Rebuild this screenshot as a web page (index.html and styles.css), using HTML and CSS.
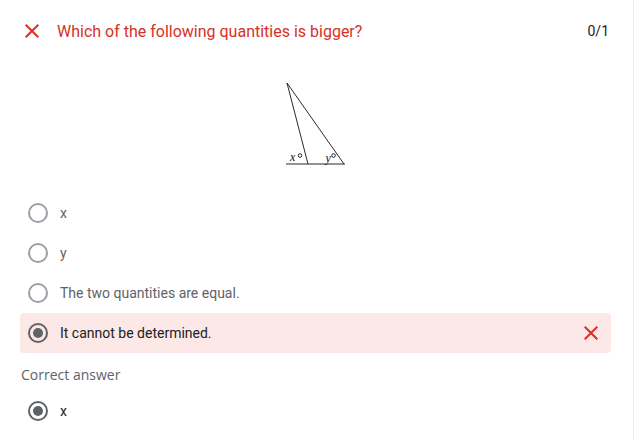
FILE: index.html
```html
<!DOCTYPE html>
<html>
<head>
    <title>Quiz result</title>
    <link rel="stylesheet" href="styles.css">
</head>
<body>

    <div class="card">
        <div class="question-head">
            <svg class="icon icon-wrong" viewBox="0 0 24 24"><path d="M19 6.41L17.59 5 12 10.59 6.41 5 5 6.41 10.59 12 5 17.59 6.41 19 12 13.41 17.59 19 19 17.59 13.41 12z"/></svg>
            <span class="question-title">Which of the following quantities is bigger?</span>
            <span class="score">0/1</span>
        </div>

        <div class="figure">
            <svg width="60" height="84" viewBox="0 0 60 84">
                <g stroke="#111" stroke-width="0.9" fill="none">
                    <line x1="0" y1="82" x2="59" y2="82"/>
                    <line x1="1" y1="1" x2="22" y2="82"/>
                    <line x1="1" y1="1" x2="58" y2="82"/>
                    <circle cx="14" cy="73.5" r="1.8"/>
                    <circle cx="47.5" cy="73.5" r="1.8"/>
                </g>
                <text x="4" y="79" class="fig-label">x</text>
                <text x="39.5" y="79.5" class="fig-label">y</text>
            </svg>
        </div>

        <div class="options">
            <div class="option">
                <span class="radio"></span>
                <span class="option-text">x</span>
            </div>
            <div class="option">
                <span class="radio"></span>
                <span class="option-text">y</span>
            </div>
            <div class="option">
                <span class="radio"></span>
                <span class="option-text">The two quantities are equal.</span>
            </div>
            <div class="option option-wrong">
                <span class="radio checked"></span>
                <span class="option-text">It cannot be determined.</span>
                <svg class="icon icon-wrong mark" viewBox="0 0 24 24"><path d="M19 6.41L17.59 5 12 10.59 6.41 5 5 6.41 10.59 12 5 17.59 6.41 19 12 13.41 17.59 19 19 17.59 13.41 12z"/></svg>
            </div>
        </div>

        <div class="correct-label">Correct answer</div>
        <div class="option option-correct">
            <span class="radio checked"></span>
            <span class="option-text">x</span>
        </div>
    </div>

</body>
</html>
```

FILE: styles.css
```css
body {
    margin: 0;
    font-family: Roboto, Arial, sans-serif;
    background: #fff;
}

.card {
    width: 591px;
    padding: 19px 22px 0 20px;
    height: 421px;
    border-right: 1px solid #efefef;
}

.question-head {
    display: flex;
    align-items: center;
    height: 24px;
}

.icon {
    width: 24px;
    height: 24px;
    flex-shrink: 0;
}

.icon-wrong {
    fill: #d93025;
}

.question-title {
    margin-left: 13px;
    font-size: 16px;
    color: #d93025;
    flex: 1;
}

.score {
    font-size: 14px;
    color: #202124;
    margin-right: 2px;
}

.figure {
    display: flex;
    justify-content: center;
    margin: 39px 0 27px;
}

.figure svg {
    display: block;
}

.fig-label {
    font-family: "Liberation Serif", serif;
    font-style: italic;
    font-size: 12px;
    fill: #111;
}

.option {
    display: flex;
    align-items: center;
    height: 40px;
    padding: 0 8px;
    font-size: 14px;
}

.option-text {
    margin-left: 12px;
    color: #5f6368;
    flex: 1;
}

.radio {
    width: 20px;
    height: 20px;
    box-sizing: border-box;
    border: 2px solid #9aa0a6;
    border-radius: 50%;
    display: flex;
    align-items: center;
    justify-content: center;
    flex-shrink: 0;
}

.radio.checked {
    border-color: #5f6368;
}

.radio.checked::after {
    content: "";
    width: 10px;
    height: 10px;
    border-radius: 50%;
    background: #5f6368;
}

.option-wrong {
    background: #fce8e6;
    border-radius: 4px;
}

.option-wrong .option-text,
.option-correct .option-text {
    color: #202124;
}

.correct-label {
    margin-top: 12px;
    margin-left: 1px;
    font-family: "Open Sans", Roboto, sans-serif;
    font-size: 14px;
    line-height: 20px;
    color: #5f6368;
    margin-bottom: 6px;
}
```
